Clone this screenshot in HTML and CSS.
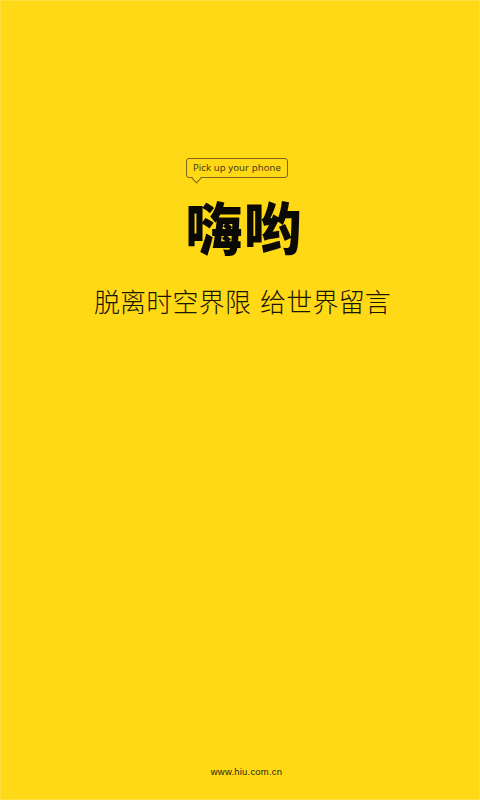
FILE: index.html
```html
<!DOCTYPE html>
<html lang="zh-CN">
<head>
<meta charset="utf-8">
<title>嗨哟</title>
<link rel="stylesheet" href="styles.css">
</head>
<body>
<main class="splash">
  <div class="brand">
    <div class="bubble">Pick up your phone</div>
    <h1 class="logo">嗨哟</h1>
    <p class="slogan">脱离时空界限 给世界留言</p>
  </div>
  <footer class="site">www.hiu.com.cn</footer>
</main>
</body>
</html>
```
FILE: styles.css
```css
* { box-sizing: border-box; margin: 0; padding: 0; }
html, body { width: 480px; height: 800px; overflow: hidden; }
body { background: #ffd916; color: #15120a; }
.splash {
  width: 480px;
  height: 800px;
  display: flex;
  flex-direction: column;
  align-items: center;
  justify-content: space-between;
  padding: 157px 0 21px;
  border: 1px solid #ffe03c;
}
.brand { display: flex; flex-direction: column; align-items: center; }
.bubble {
  position: relative;
  width: 102px;
  height: 20px;
  margin-left: -6px;
  border: 1px solid #7a6610;
  border-radius: 3px;
  font: 400 9.6px/17px "Open Sans", sans-serif;
  letter-spacing: 0.1px;
  text-align: center;
  color: #3a3210;
}
.bubble::after {
  content: "";
  position: absolute;
  left: 6px;
  top: 19px;
  width: 6px;
  height: 6px;
  background: #ffd916;
  border-right: 1px solid #7a6610;
  border-bottom: 1px solid #7a6610;
  transform: translateY(-3px) rotate(45deg);
}
.logo {
  margin-top: 15px;
  margin-left: 9px;
  font: 900 57px/64px "Noto Sans CJK SC", sans-serif;
  letter-spacing: 2px;
  color: #0a0906;
}
.slogan {
  margin-top: 25px;
  margin-left: 5px;
  font: 300 26px/38px "Noto Sans CJK SC", sans-serif;
  letter-spacing: 0.2px;
  word-spacing: 3px;
  white-space: nowrap;
  color: #1a1606;
}
.site {
  margin-left: 13px;
  font: 400 9.5px/12px "Liberation Sans", sans-serif;
  letter-spacing: 0.2px;
  color: #2a2408;
}
```
